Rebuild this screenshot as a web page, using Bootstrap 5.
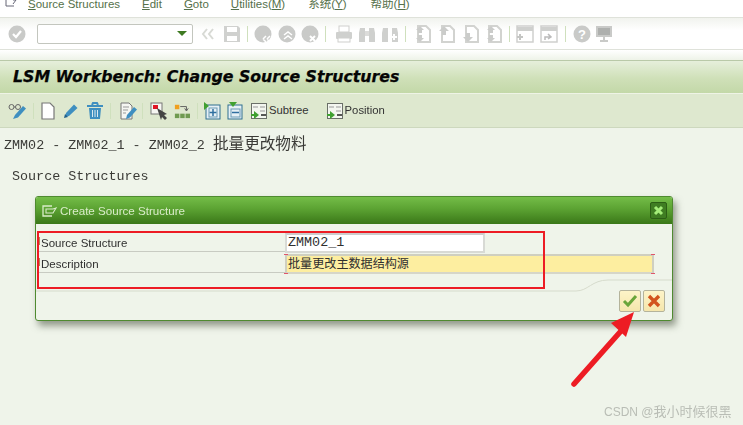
<!DOCTYPE html>
<html lang="en">
<head>
<meta charset="utf-8">
<title>LSM Workbench</title>
<link href="https://cdn.jsdelivr.net/npm/bootstrap@5.3.0/dist/css/bootstrap.min.css" rel="stylesheet">
<style>
html,body{margin:0;height:100%;overflow:hidden}
body{width:743px;height:425px;background:#eff4ea;font-family:"Liberation Sans","Noto Sans CJK SC",sans-serif;position:relative;color:#222;filter:blur(.35px)}
svg{display:block;flex:none}
.sap-menu{height:18px;background:#fff;border-bottom:1px solid #dfe2da;font-size:11.5px;line-height:8px;color:#55704a;padding-left:5px;overflow:hidden}
.sap-menu span{white-space:nowrap}
.m1{margin-left:10px}.m2{margin-left:22px}.m3{margin-left:22px}.m4{margin-left:22px}.m5{margin-left:23px}.m6{margin-left:24px}
.sap-sys{height:32px;background:linear-gradient(#f1f3ee,#fff 40%,#fff);border-bottom:1px solid #dfe2da;padding-left:8px}
.sys-ic{margin-left:6px}
.sys-ic.t{margin-left:5px}
.sys-ic.n{margin-left:4px}
.sys-ic.w{margin-left:7px}
.sys-ic.ww{margin-left:9px}
.sys-ic.c{margin-left:8px}
.cmd{width:156px;height:20px;margin-left:11px;border:1px solid #c3c6be;border-radius:2px;background:#fff;padding-right:5px}
.tri{width:0;height:0;border-left:5px solid transparent;border-right:5px solid transparent;border-top:5px solid #3f7a22}
.vsep{width:1px;height:16px;background:#cfe0bd;flex:none;margin-left:6px}
.vsep.t{margin-left:5px}
.vsep.w{margin-left:7px}
.sap-gap{height:10px;background:linear-gradient(#fff,#eef3e8)}
.sap-title{height:33px;background:linear-gradient(#e6efdb,#cfe0b8 55%,#c3d8a8);border-top:1px solid #b9c9a8;padding-left:13px;font:italic 700 15.77px/31px "DejaVu Sans",sans-serif;color:#050505;white-space:nowrap;-webkit-text-stroke:.25px #050505}
.sap-app{height:35px;background:#dee8cf;border-top:1px solid #eef3e6;border-bottom:1px solid #cdd8be;padding-left:8px;font-size:11.3px;color:#333}
.ap2{margin-left:2px}.ap5{margin-left:5px}.ap6{margin-left:6px}.ap7{margin-left:7px}.ap8{margin-left:8px}.ap18{margin-left:18px}
.sap-body{font-family:"Liberation Mono","Noto Sans CJK SC",monospace;font-size:13.4px;color:#3a3a36;white-space:nowrap}
.ln1{padding:8px 0 0 4px;line-height:18px}
.ln1 b{font-weight:400;font-size:15.6px;letter-spacing:0}
.ln2{padding:13px 0 0 12px;line-height:18px}
.sap-dialog{margin:10px 0 0 35px;width:638px;height:125px;background:#eff4ea;border:1px solid #4f8a30;border-radius:3px;box-shadow:3px 5px 7px rgba(70,80,60,.55);position:relative;overflow:hidden;font-family:"Liberation Sans","Noto Sans CJK SC",sans-serif}
.dlg-head{height:27px;background:linear-gradient(#74bd48,#5ba232 45%,#3a7718);color:#d9ecc9;font-size:11.6px;padding:0 5px}
.dlg-x{width:17px;height:17px;border-radius:2px;background:#3f7d22;border:1px solid #2c5e14}
.dlg-form{padding:9px 0 0 2px;font-size:11.5px;color:#2f2f2f}
.frow{height:21px}
.flabel{width:247px;height:19px;line-height:21px;border-bottom:1px solid #c8cbc2;padding-left:3px;flex:none;position:relative}
.flabel::before{content:"";position:absolute;left:0;top:4px;width:2px;height:8px;background:#b48a55}
.finput{height:20px;border:2px solid #d8dad5;padding:0 1px;flex:none;line-height:16px;font-size:13.4px;white-space:nowrap}
.fi1{width:200px;background:#fff;border-top-color:#ccc;font-family:"Liberation Mono",monospace}
.fi2{width:369px;background:#fdeea0;border-color:#cfcfc0 #cfcfc0 #d6d6c8;font-size:12.1px;position:relative}
.fi2::before,.fi2::after{content:"";position:absolute;top:-2px;bottom:-2px;width:4px;border:solid #e0566a;border-width:1px 0}
.fi2::before{left:-3px}
.fi2::after{right:-3px}
.curve{position:absolute;left:0;top:56px}
.dlg-btns{position:absolute;right:7px;bottom:8px;gap:2px}
.dbtn{width:22px;height:22px;border:1px solid #b4b39b;border-radius:2px;background:linear-gradient(#fdf4c8,#f5e6ac);padding:0}
.red-box{position:absolute;left:37px;top:231px;width:508px;height:58px;border:2px solid #ed1c24;pointer-events:none}
.red-arrow{position:absolute;left:565px;top:308px}
.wm{position:absolute;left:604px;top:404px;font-size:12px;line-height:16px;color:#b9bdb5;white-space:nowrap}
.wm b{font-weight:400;font-size:13px}
</style>
</head>
<body>
<svg width="0" height="0" class="position-absolute">
<defs>
<symbol id="ge" viewBox="0 0 18 18"><circle cx="9" cy="9" r="8.5" fill="#c9cac8"/></symbol>
<symbol id="doc" viewBox="0 0 16 18"><path d="M2 1h8l4 4v12H2z" fill="#fff" stroke="#d2d3d0" stroke-width="2"/></symbol>
<symbol id="pen" viewBox="0 0 18 18"><path d="M3 15l1-4L12 2.500l3.500 3.500L7 14z" fill="#3f8fc0"/><path d="M2 16l1-4 3 3z" fill="#1f5f8a"/></symbol>
<symbol id="tree" viewBox="0 0 16 18"><rect x=".5" y="1.500" width="15" height="15" fill="#f3f6ef" stroke="#6a6f68"/><path d="M2 5h5M9 5h5M9 9h5" stroke="#999"/><path d="M0 12h3V9l5 4-5 4v-3H0z" fill="#3fa030"/><path d="M10 13h5" stroke="#222" stroke-width="1.500"/></symbol>
</defs>
</svg>

<div class="sap-menu d-flex">
  <svg width="13" height="9" viewBox="0 0 13 9"><path d="M1 0v6h8" fill="none" stroke="#667" stroke-width="1"/><path d="M8 0l3 0-3 4" fill="none" stroke="#667"/></svg>
  <span class="m1"><u>S</u>ource Structures</span>
  <span class="m2"><u>E</u>dit</span>
  <span class="m3"><u>G</u>oto</span>
  <span class="m4"><u>U</u>tilities(<u>M</u>)</span>
  <span class="m5">系统(<u>Y</u>)</span>
  <span class="m6">帮助(<u>H</u>)</span>
</div>

<div class="sap-sys d-flex align-items-center">
  <svg width="18" height="18" viewBox="0 0 18 18"><use href="#ge"/><path d="M5 9l3 3 5-6" fill="none" stroke="#fff" stroke-width="2.200"/></svg>
  <div class="cmd d-flex align-items-center justify-content-end"><div class="tri"></div></div>
  <svg class="sys-ic c" width="14" height="12" viewBox="0 0 14 12"><path d="M6 1L2 6l4 5M12 1L8 6l4 5" fill="none" stroke="#d8dad5" stroke-width="2"/></svg>
  <svg class="sys-ic c" width="18" height="18" viewBox="0 0 18 18"><path d="M1 1h14l2 2v14H1z" fill="#d0d1cf"/><rect x="4" y="2" width="10" height="5" fill="#fff"/><rect x="4" y="11" width="10" height="5" fill="#fff"/></svg>
  <div class="vsep"></div>
  <svg class="sys-ic" width="18" height="18" viewBox="0 0 18 18"><use href="#ge"/><path d="M9 14l3-3M13 14l3-3M9 14l3 3M13 14l3 3" stroke="#fff" stroke-width="1.500"/></svg>
  <svg class="sys-ic" width="18" height="18" viewBox="0 0 18 18"><use href="#ge"/><path d="M6 10l4-3 4 3M6 14l4-3 4 3" fill="none" stroke="#fff" stroke-width="1.500"/></svg>
  <svg class="sys-ic t" width="18" height="18" viewBox="0 0 18 18"><use href="#ge"/><path d="M9 11l5 5M14 11l-5 5" stroke="#fff" stroke-width="2"/></svg>
  <div class="vsep"></div>
  <svg class="sys-ic ww" width="18" height="18" viewBox="0 0 18 18"><rect x="4" y="1" width="10" height="6" fill="#fff" stroke="#cfcfcd"/><rect x="1" y="7" width="16" height="7" rx="1" fill="#cfd0ce"/><rect x="3" y="13" width="12" height="4" fill="#fff" stroke="#cfcfcd"/></svg>
  <svg class="sys-ic t" width="18" height="18" viewBox="0 0 18 18"><path d="M2 3h5v14H1V8zM11 3h5l1 5v9h-6z" fill="#cfd0ce"/><rect x="7" y="6" width="4" height="5" fill="#dcdcda"/></svg>
  <svg class="sys-ic t" width="18" height="18" viewBox="0 0 18 18"><path d="M2 3h5v14H1V8zM11 3h5l1 5v9h-6z" fill="#cfd0ce"/><path d="M13 9v6M10 12h6" stroke="#fff" stroke-width="2"/></svg>
  <div class="vsep"></div>
  <svg class="sys-ic ww" width="18" height="18" viewBox="0 0 18 18"><use href="#doc"/><path d="M5 1l4 4H7v3H3V5H1zM3 10h4v3h2l-4 4-4-4h2z" fill="#cbccca"/></svg>
  <svg class="sys-ic" width="18" height="18" viewBox="0 0 18 18"><use href="#doc"/><path d="M5 1l5 5H7v4H3V6H0z" fill="#cbccca"/></svg>
  <svg class="sys-ic" width="18" height="18" viewBox="0 0 18 18"><use href="#doc"/><path d="M3 8h4v4h3l-5 5-5-5h3z" fill="#cbccca"/></svg>
  <svg class="sys-ic t" width="18" height="18" viewBox="0 0 18 18"><use href="#doc"/><path d="M5 1l4 4H7v3H3V5H1zM3 10h4v3h2l-4 4-4-4h2z" fill="#cbccca"/></svg>
  <div class="vsep t"></div>
  <svg class="sys-ic" width="18" height="18" viewBox="0 0 18 18"><rect x="1" y="1" width="16" height="16" fill="#fff" stroke="#cfd0ce" stroke-width="1.500"/><rect x="1" y="2" width="16" height="4" fill="#cfd0ce"/><path d="M4 9v6M1 12h6" stroke="#c4c5c3" stroke-width="2"/></svg>
  <svg class="sys-ic" width="18" height="18" viewBox="0 0 18 18"><rect x="1" y="1" width="16" height="16" fill="#fff" stroke="#cfd0ce" stroke-width="1.500"/><rect x="1" y="2" width="16" height="4" fill="#cfd0ce"/><path d="M5 15v-3h5M8 9l3 3-3 2" fill="none" stroke="#bbb" stroke-width="1.500"/></svg>
  <div class="vsep w"></div>
  <svg class="sys-ic w" width="18" height="18" viewBox="0 0 18 18"><use href="#ge"/><text x="9" y="14" text-anchor="middle" font-size="13" font-weight="700" font-family="Liberation Sans" fill="#fff">?</text></svg>
  <svg class="sys-ic n" width="18" height="18" viewBox="0 0 18 18"><rect x="1" y="1" width="16" height="11" fill="#c9cac8"/><rect x="3" y="3" width="12" height="7" fill="#aeb0ae"/><path d="M8 12h2v3h3v2H5v-2h3z" fill="#c9cac8"/></svg>
</div>
<div class="sap-gap"></div>

<div class="sap-title">LSM Workbench: Change Source Structures</div>

<div class="sap-app d-flex align-items-center">
  <svg width="20" height="18" viewBox="0 0 20 18"><circle cx="3.500" cy="5" r="2.500" fill="none" stroke="#666"/><circle cx="10" cy="5" r="2.500" fill="none" stroke="#666"/><path d="M6 5h1.500" stroke="#666"/><path d="M5 17l2-4 8-9 3 2.500-8 9z" fill="#3f8fc0"/></svg>
  <div class="vsep t"></div>
  <svg class="ap6" width="16" height="18" viewBox="0 0 16 18"><path d="M2 1h8l4 4v12H2z" fill="#fff" stroke="#777" stroke-width="1.200"/></svg>
  <svg class="ap6" width="18" height="18" viewBox="0 0 18 18"><use href="#pen"/></svg>
  <svg class="ap6" width="18" height="18" viewBox="0 0 18 18"><path d="M1 4h16M6 3l1-2h4l1 2" fill="none" stroke="#3f8fc0" stroke-width="2"/><path d="M3 6h12l-1 11H4z" fill="#3f8fc0"/><path d="M6.500 8v7M9 8v7M11.500 8v7" stroke="#dbe9f0"/></svg>
  <div class="vsep"></div>
  <svg class="ap8" width="18" height="18" viewBox="0 0 18 18"><path d="M2 1h8l3 3v13H2z" fill="#f5f6f2" stroke="#777"/><path d="M4 5h6M4 8h5M4 11h3" stroke="#999"/><path d="M7 17l1-4 7-8 3 2.500-7 8z" fill="#3f8fc0"/></svg>
  <div class="vsep t"></div>
  <svg class="ap7" width="18" height="18" viewBox="0 0 18 18"><rect x="1" y="1" width="11" height="11" fill="#f6f6f2" stroke="#777"/><rect x="3" y="3" width="5" height="4" fill="#e01525"/><path d="M7 6l10 6-3 1 3 3-2 2-3-3-1 3z" fill="#444"/></svg>
  <svg class="ap6" width="16" height="18" viewBox="0 0 18 18"><rect x="1" y="2" width="5" height="5" fill="#f0a020"/><rect x="1" y="12" width="5" height="5" fill="#6f9a50"/><rect x="7" y="12" width="5" height="5" fill="#6f9a50"/><rect x="13" y="12" width="5" height="5" fill="#6f9a50"/><path d="M7 4h7v4M12 6l2 3 2-3" fill="none" stroke="#555"/></svg>
  <div class="vsep w"></div>
  <svg class="ap5" width="18" height="18" viewBox="0 0 18 18"><rect x="3" y="3" width="14" height="14" fill="#e6f0f5" stroke="#2f6f8f"/><path d="M1 0l5 4-5 4z" fill="#3fa030"/><path d="M10 7v7M6.500 10.500h7" stroke="#2f6fa0" stroke-width="1.500"/><rect x="6" y="6" width="8" height="9" fill="none" stroke="#6a9ab5"/></svg>
  <svg class="ap5" width="18" height="18" viewBox="0 0 18 18"><rect x="2" y="3" width="14" height="14" fill="#e6f0f5" stroke="#2f6f8f"/><path d="M3 0h8L7 5z" fill="#3fa030"/><path d="M6 10.500h7" stroke="#2f6fa0" stroke-width="1.500"/><rect x="5" y="7" width="9" height="8" fill="none" stroke="#6a9ab5"/></svg>
  <svg class="ap7" width="16" height="18" viewBox="0 0 16 18"><use href="#tree"/></svg>
  <span class="ap2">Subtree</span>
  <svg class="ap18" width="16" height="18" viewBox="0 0 16 18"><use href="#tree"/></svg>
  <span class="ap2">Position</span>
</div>

<div class="sap-body">
  <div class="ln1">ZMM02 - ZMM02_1 - ZMM02_2 <b>批量更改物料</b></div>
  <div class="ln2">Source Structures</div>

  <div class="sap-dialog">
    <div class="dlg-head d-flex align-items-center">
      <svg width="17" height="14" viewBox="0 0 17 14"><path d="M11 2H2v10h9" fill="none" stroke="#d9ecc9" stroke-width="1.300"/><path d="M5 5h7l3-1-3 5H5z" fill="none" stroke="#d9ecc9" stroke-width="1.100"/></svg>
      <span class="ap2">Create Source Structure</span>
      <div class="dlg-x ms-auto d-flex align-items-center justify-content-center"><svg width="11" height="11" viewBox="0 0 11 11"><path d="M2 2l7 7M9 2l-7 7" stroke="#a4ec78" stroke-width="3"/></svg></div>
    </div>
    <div class="dlg-form">
      <div class="frow d-flex"><div class="flabel">Source Structure</div><div class="finput fi1">ZMM02_1</div></div>
      <div class="frow d-flex"><div class="flabel">Description</div><div class="finput fi2">批量更改主数据结构源</div></div>
    </div>
    <svg class="curve" width="638" height="40" viewBox="0 0 638 40"><path d="M0 38H540C552 38 556 27 572 27H638" fill="none" stroke="#d6dbcc"/></svg>
    <div class="dlg-btns d-flex">
      <button type="button" class="dbtn d-flex align-items-center justify-content-center"><svg width="16" height="14" viewBox="0 0 16 14"><path d="M2 7l4 4 8-9" fill="none" stroke="#6aa53a" stroke-width="3"/></svg></button>
      <button type="button" class="dbtn d-flex align-items-center justify-content-center"><svg width="14" height="14" viewBox="0 0 14 14"><path d="M2 2l10 10M12 2L2 12" stroke="#d2541e" stroke-width="3.400"/></svg></button>
    </div>
  </div>
</div>

<div class="red-box"></div>
<svg class="red-arrow" width="80" height="84" viewBox="0 0 80 84"><path d="M9 76L56 23" stroke="#ed1c24" stroke-width="5.500" stroke-linecap="round"/><path d="M69 4L46 15 61 29z" fill="#ed1c24"/></svg>
<div class="wm">CSDN @<b>我小时候很黑</b></div>
</body>
</html>
